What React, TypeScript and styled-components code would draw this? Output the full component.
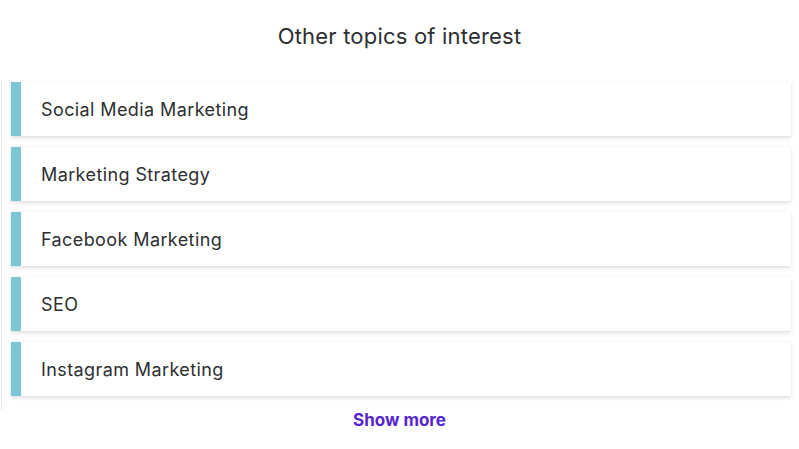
import React from 'react';
import styled, { createGlobalStyle } from 'styled-components';

const GlobalStyle = createGlobalStyle`
  html, body {
    margin: 0;
    padding: 0;
    background: #ffffff;
  }
  body {
    font-family: Inter, "Liberation Sans", sans-serif;
    color: #2d2f31;
  }
`;

const Page = styled.div`
  width: 799px;
  height: 449px;
  box-sizing: border-box;
  padding-top: 21px;
`;

const Title = styled.h2`
  margin: 0 0 31px 0;
  text-align: center;
  font-size: 22px;
  font-weight: 400;
  line-height: 30px;
  letter-spacing: 0.2px;
  color: #2d2f31;
`;

const Frame = styled.div`
  margin-left: 1px;
  border-left: 1px solid #e4e4e4;
  padding: 0 8px 14px 9px;
`;

const List = styled.ul`
  list-style: none;
  margin: 0;
  padding: 0;
  display: flex;
  flex-direction: column;
  gap: 11px;
  width: 780px;
`;

const Topic = styled.li`
  display: flex;
  align-items: center;
  height: 54px;
  box-sizing: border-box;
  background: #ffffff;
  border-left: 10px solid #7cc6d6;
  padding-left: 20px;
  box-shadow: 0 2px 4px rgba(0, 0, 0, 0.12), 0 0 2px rgba(0, 0, 0, 0.05);
  font-size: 18px;
  letter-spacing: 0.4px;
  color: #2d2f31;
`;

const ShowMore = styled.button`
  display: block;
  margin: -2px auto 0;
  border: none;
  background: none;
  padding: 0;
  font-family: Inter, "Liberation Sans", sans-serif;
  font-size: 17px;
  font-weight: 700;
  color: #5624d0;
  cursor: pointer;
  line-height: 24px;
`;

const topics = [
  'Social Media Marketing',
  'Marketing Strategy',
  'Facebook Marketing',
  'SEO',
  'Instagram Marketing',
];

const App: React.FC = () => {
  return (
    <>
      <GlobalStyle />
      <Page>
        <Title>Other topics of interest</Title>
        <Frame>
          <List>
            {topics.map((t) => (
              <Topic key={t}>{t}</Topic>
            ))}
          </List>
        </Frame>
        <ShowMore>Show more</ShowMore>
      </Page>
    </>
  );
};

export default App;
